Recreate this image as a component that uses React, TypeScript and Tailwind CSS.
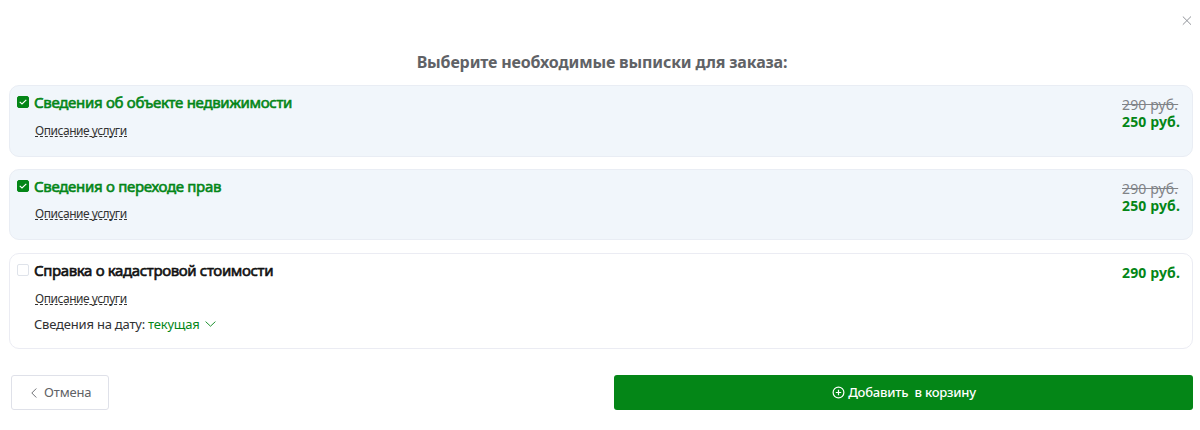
import React from 'react';

interface Service {
  id: number;
  title: string;
  titleClass: string;
  price: string;
  oldPrice?: string;
  checked: boolean;
  cardClass: string;
  linkClass: string;
  date?: string;
}

const SERVICES: Service[] = [
  {
    id: 1,
    title: 'Сведения об объекте недвижимости',
    titleClass: 'tracking-[-0.3px]',
    price: '250 руб.',
    oldPrice: '290 руб.',
    checked: true,
    cardClass: 'h-[72px] mb-3',
    linkClass: 'mt-3',
  },
  {
    id: 2,
    title: 'Сведения о переходе прав',
    titleClass: 'tracking-[-0.3px]',
    price: '250 руб.',
    oldPrice: '290 руб.',
    checked: true,
    cardClass: 'h-[71px] mb-[13px]',
    linkClass: 'mt-[11px]',
  },
  {
    id: 3,
    title: 'Справка о кадастровой стоимости',
    titleClass: 'tracking-[-0.36px]',
    price: '290 руб.',
    checked: false,
    cardClass: 'h-24',
    linkClass: 'mt-3',
    date: 'текущая',
  },
];

const Checkbox: React.FC<{ checked: boolean }> = ({ checked }) => (
  <span
    className={`w-3 h-3 shrink-0 rounded-[2px] border flex items-center justify-center ${
      checked ? 'bg-[#048617] border-[#048617]' : 'bg-white border-[#dfe3ea]'
    }`}
  >
    {checked && (
      <svg width="8" height="6" viewBox="0 0 8 6" fill="none" stroke="#fff" strokeWidth="1.1">
        <path d="M0.7 2.8 L3 5 L7.3 0.8" />
      </svg>
    )}
  </span>
);

const ServiceCard: React.FC<{ service: Service }> = ({ service }) => (
  <div
    className={`flex justify-between rounded-[10px] border pl-[7px] pr-[11px] ${service.cardClass} ${
      service.checked ? 'bg-[#f1f6fb] border-[#e9edf4]' : 'bg-white border-[#ebecf3]'
    }`}
  >
    <div className="pt-1">
      <label className="flex items-center h-6 gap-[5px]">
        <Checkbox checked={service.checked} />
        <span
          className={`text-[15px] leading-6 pb-px font-normal [-webkit-text-stroke:0.6px] whitespace-nowrap ${service.titleClass} ${
            service.checked ? 'text-[#048617]' : 'text-[#111]'
          }`}
        >
          {service.title}
        </span>
      </label>
      <div className={`ml-[18px] flex ${service.linkClass}`}>
        <a className="text-[12px] leading-[9px] h-[11px] tracking-[-0.46px] text-[#333] border-b border-dashed border-[#333] whitespace-nowrap">
          Описание услуги
        </a>
      </div>
      {service.date && (
        <div className="ml-[17px] mt-[9px] flex items-center text-[13px] leading-5 whitespace-nowrap">
          <span className="text-[#303133] tracking-[-0.2px]">Сведения на дату:</span>
          <span className="ml-[3px] text-[#048617] tracking-[-0.2px]">{service.date}</span>
          <svg className="ml-[5px]" width="11" height="6" viewBox="0 0 11 6" fill="none" stroke="#048617" strokeWidth="0.9">
            <path d="M0.6 0.6 L5.5 5.2 L10.4 0.6" />
          </svg>
        </div>
      )}
    </div>
    <div className="w-[59px] pt-[10px] flex flex-col whitespace-nowrap">
      {service.oldPrice && (
        <span className="text-[14px] leading-[17px] tracking-[0.15px] text-[#808387] line-through">{service.oldPrice}</span>
      )}
      <span className="text-[14px] leading-[18px] tracking-[0.15px] font-bold text-[#048617]">{service.price}</span>
    </div>
  </div>
);

export default function App() {
  return (
    <div className="w-[1200px] h-[430px] bg-white overflow-hidden font-['Noto_Sans',sans-serif] pl-[9px] pr-[7px]">
      <div className="flex justify-end h-[50px] pt-4">
        <svg className="mr-[1px]" width="10" height="10" viewBox="0 0 10 10" fill="none" stroke="#909399" strokeWidth="1">
          <path d="M0.8 0.5 L9 8.7 M9 0.5 L0.8 8.7" />
        </svg>
      </div>
      <h1 className="h-[35px] pl-[2px] text-center text-[16px] leading-6 font-bold text-[#606266] tracking-[-0.15px]">
        Выберите необходимые выписки для заказа:
      </h1>
      {SERVICES.map((service) => (
        <ServiceCard key={service.id} service={service} />
      ))}
      <div className="flex justify-between mt-[26px] pl-[2px]">
        <button className="w-[98px] h-[35px] rounded-[3px] border border-[#dfe1e9] flex items-center pl-[19px] text-[13px] tracking-[-0.15px] text-[#606266]">
          <svg className="mr-[7px]" width="6" height="10" viewBox="0 0 6 10" fill="none" stroke="#606266" strokeWidth="0.9">
            <path d="M5.3 0.5 L0.8 5 L5.3 9.5" />
          </svg>
          Отмена
        </button>
        <button className="w-[579px] h-[35px] rounded-[3px] bg-[#048617] flex items-center justify-center text-[13px] font-medium text-white">
          <svg className="ml-px mr-[3px]" width="13" height="13" viewBox="0 0 13 13" fill="none" stroke="#fff" strokeWidth="1.2">
            <circle cx="6.5" cy="6.5" r="5.4" />
            <path d="M6.5 3.8 V9.2 M3.8 6.5 H9.2" />
          </svg>
          <span className="whitespace-pre tracking-[-0.23px]">Добавить  в корзину</span>
        </button>
      </div>
    </div>
  );
}
